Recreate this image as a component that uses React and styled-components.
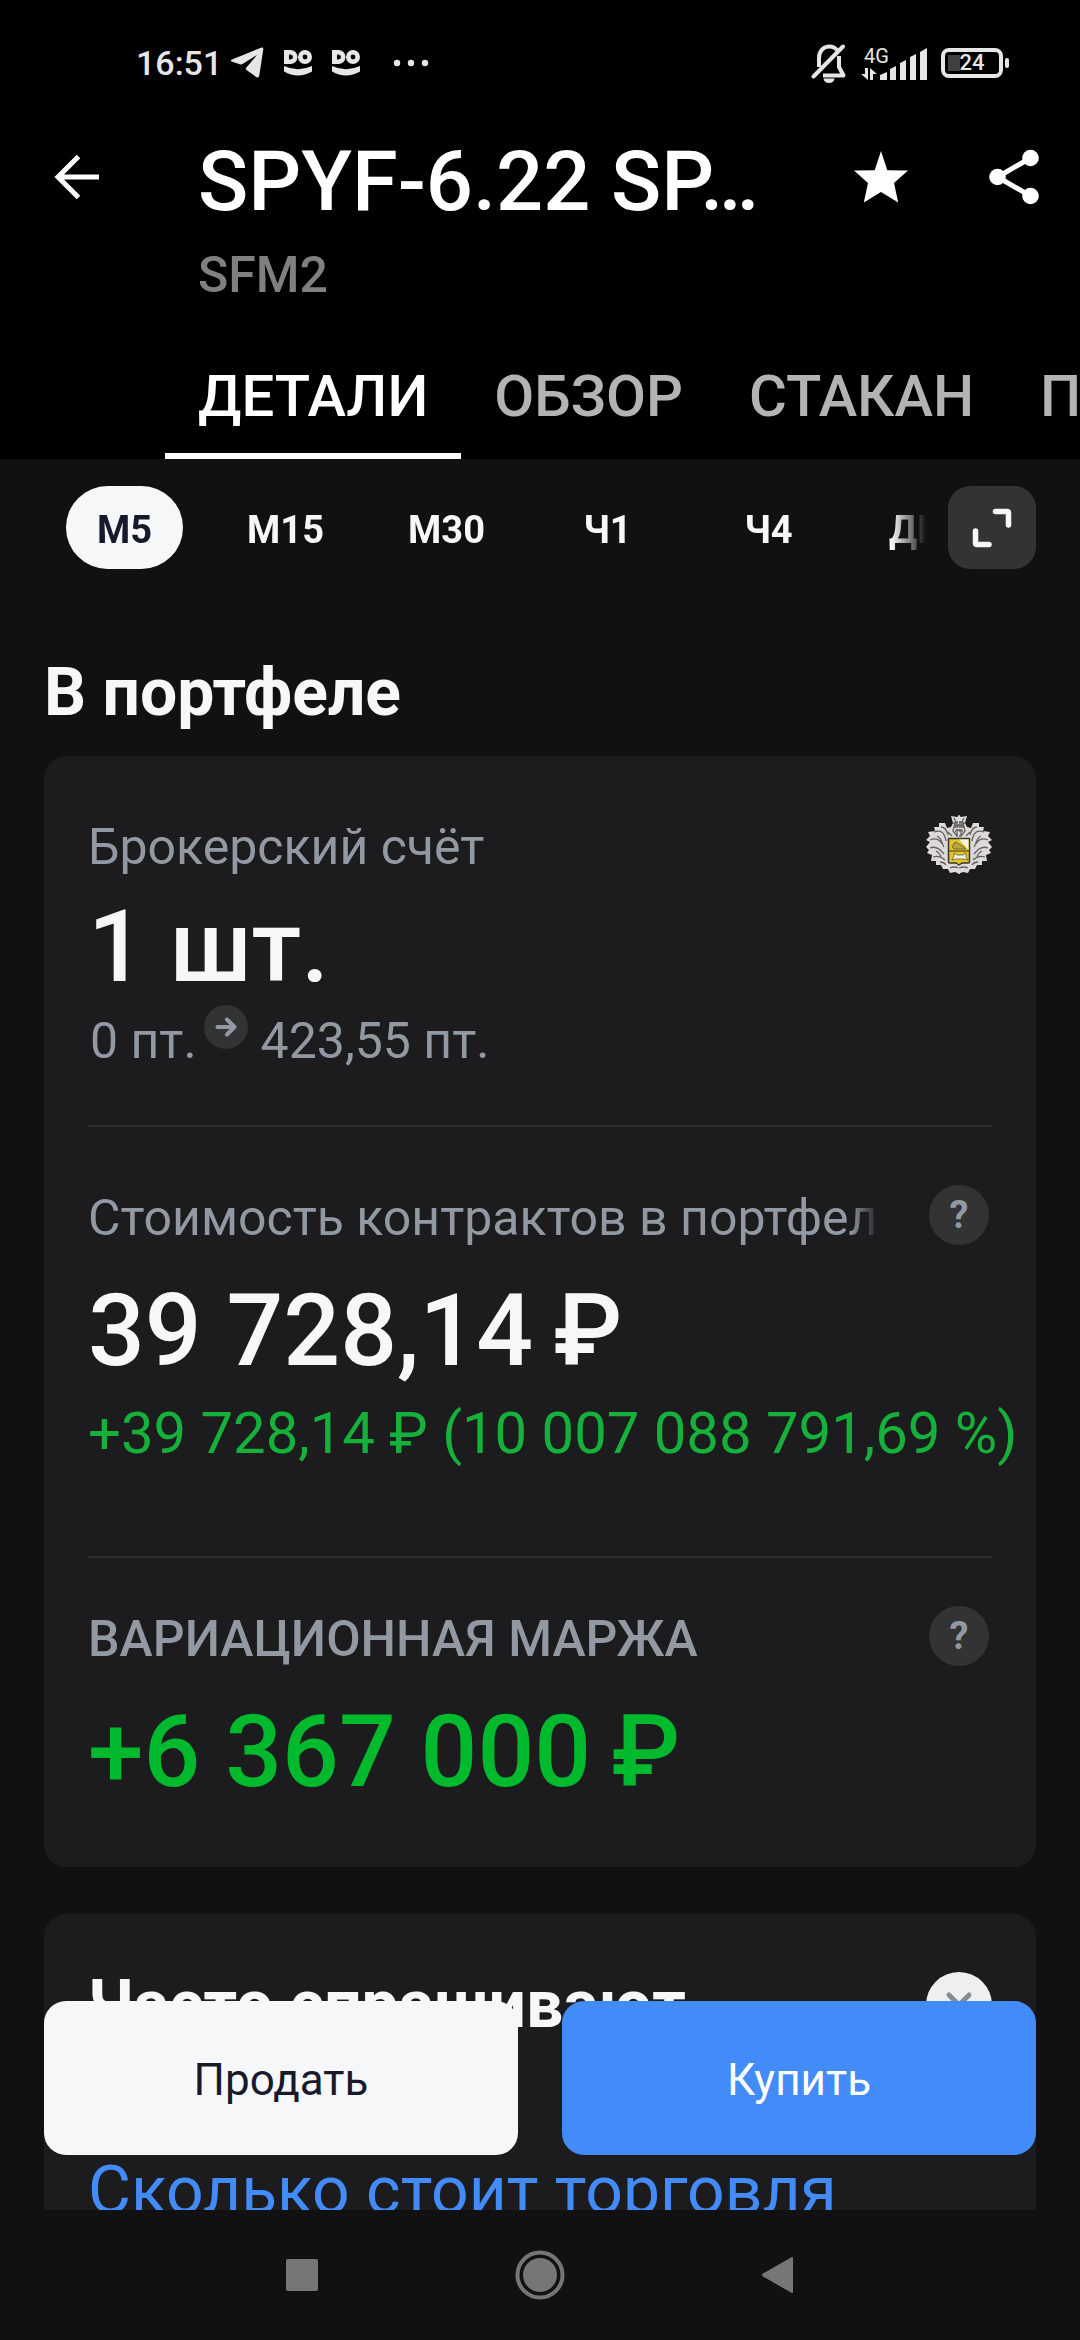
import React, { useState } from "react";
import styled, { createGlobalStyle, css } from "styled-components";

const GlobalStyle = createGlobalStyle`
  * {
    box-sizing: border-box;
  }

  body {
    margin: 0;
    background: #111111;
    font-family: Roboto, "Noto Sans", sans-serif;
  }

  button {
    padding: 0;
    border: none;
    background: none;
    color: inherit;
    font-family: inherit;
    cursor: pointer;
  }

  h1, h2, p {
    margin: 0;
  }

  svg {
    display: block;
    flex: none;
  }
`;

const Page = styled.div`
  display: flex;
  flex-direction: column;
  height: 100vh;
  overflow: hidden;
  color: #f6f7f8;
`;

const Header = styled.header`
  flex: none;
  background: #000000;
`;

const StatusBar = styled.div`
  display: flex;
  align-items: center;
  justify-content: space-between;
  height: 126px;
  padding: 0 71px 0 136px;
  color: #e6e6e6;
`;

const StatusGroup = styled.div`
  display: flex;
  align-items: center;
  gap: ${(props) => props.$gap}px;
`;

const Clock = styled.span`
  font-size: 34px;
  font-weight: 500;
`;

const Battery = styled.div`
  display: flex;
  align-items: center;
  gap: 2px;

  &::after {
    content: "";
    width: 4px;
    height: 10px;
    border-radius: 2px;
    background: #e6e6e6;
  }
`;

const BatteryBody = styled.div`
  display: flex;
  align-items: center;
  justify-content: center;
  width: 62px;
  height: 30px;
  border: 4px solid #e6e6e6;
  border-radius: 8px;
  background: linear-gradient(#404040, #404040) 3px 3px / 12px 16px no-repeat;
  font-size: 22px;
  font-weight: 500;
  line-height: 22px;
`;

const Network = styled.div`
  display: flex;
  align-items: flex-end;
  gap: 2px;
`;

/* the label is wider than the arrows and hangs over the short bars */
const NetworkType = styled.div`
  display: flex;
  flex-direction: column;
  gap: 2px;
  width: 17px;
  font-size: 20px;
  line-height: 20px;
  text-indent: 3px;
  white-space: nowrap;
`;

const AppBar = styled.div`
  display: flex;
  align-items: flex-start;
  padding: 7px 22px 0 33px;
`;

const IconButton = styled.button`
  display: flex;
  flex: none;
  align-items: center;
  justify-content: center;
  width: 88px;
  height: 88px;
`;

const Titles = styled.div`
  flex: 1;
  min-width: 0;
  margin-left: 77px;
`;

const Title = styled.h1`
  overflow: hidden;
  font-size: 83px;
  font-weight: 500;
  line-height: 98px;
  color: #ffffff;
  white-space: nowrap;
`;

const Ticker = styled.p`
  margin-top: 15px;
  font-size: 50px;
  font-weight: 500;
  line-height: 58px;
  color: #808080;
`;

const Actions = styled.div`
  display: flex;
  gap: 45px;
`;

const Tabs = styled.nav`
  display: flex;
  margin-top: 29px;
  padding-left: 165px;
  overflow: hidden;
`;

const Tab = styled.button`
  flex: none;
  height: 126px;
  padding: 6px 33px 0;
  border-bottom: 6px solid ${(props) => (props.$active ? "#ffffff" : "transparent")};
  color: ${(props) => (props.$active ? "#ffffff" : "#b3b3b3")};
  font-size: 58px;
  font-weight: 500;
`;

const Body = styled.div`
  position: relative;
  flex: 1;
  min-height: 0;
`;

const Content = styled.main`
  height: 100%;
  padding: 27px 44px 0;
  overflow: hidden;
`;

const IntervalRow = styled.div`
  display: flex;
  gap: 22px;
`;

const Intervals = styled.div`
  display: flex;
  flex: 1;
  min-width: 0;
  gap: 44px;
  padding-left: 22px;
  overflow: hidden;
  mask-image: linear-gradient(to left, transparent, #000000 34px);
`;

const Interval = styled.button`
  flex: none;
  min-width: 117px;
  height: 83px;
  padding: 5px 18px 0;
  border-radius: 42px;
  font-size: 38px;
  font-weight: 700;
  ${(props) =>
    props.$active &&
    css`
      background: #f6f7f8;
      color: #171a2b;
    `}
`;

const ExpandButton = styled.button`
  display: flex;
  flex: none;
  align-items: center;
  justify-content: center;
  width: 88px;
  height: 83px;
  border-radius: 22px;
  background: #333333;
`;

const Heading = styled.h2`
  font-size: 66px;
  font-weight: 700;
  line-height: 78px;
`;

const PortfolioHeading = styled(Heading)`
  margin: 85px 0 24px;
`;

const Card = styled.section`
  padding: 0 44px;
  border-radius: 22px;
  background: #1c1c1e;

  & + & {
    margin-top: 47px;
  }
`;

const Block = styled.div`
  padding: ${(props) => props.$top}px 0 ${(props) => props.$bottom}px;

  & + & {
    border-top: 2px solid #2e2e30;
  }
`;

const BlockTop = styled.div`
  display: flex;
  align-items: flex-start;
  justify-content: space-between;
  gap: 49px;
`;

const Label = styled.p`
  flex: 1;
  min-width: 0;
  padding-top: 3px;
  overflow: hidden;
  color: #9299a2;
  font-size: 50px;
  font-weight: ${(props) => (props.$strong ? 500 : 400)};
  line-height: 60px;
  white-space: nowrap;
  mask-image: linear-gradient(to left, transparent, #000000 30px);
`;

const HelpButton = styled.button`
  width: 60px;
  height: 60px;
  margin-right: 3px;
  border-radius: 50%;
  background: #333333;
  color: #9299a2;
  font-size: 38px;
  font-weight: 700;
`;

const Value = styled.p`
  margin-top: ${(props) => props.$gap}px;
  color: ${(props) => (props.$gain ? "#00b92d" : "#f6f7f8")};
  font-size: 100px;
  font-weight: 500;
  line-height: 118px;
  white-space: nowrap;
`;

const Points = styled.div`
  display: flex;
  gap: 7px;
  margin-top: 5px;
  padding-left: 2px;
  color: #9299a2;
  font-size: 50px;
  line-height: 60px;
`;

const PointsArrow = styled.span`
  display: flex;
  align-items: center;
  justify-content: center;
  width: 44px;
  height: 44px;
  margin: -6px 6px 0 0;
  border-radius: 50%;
  background: #333333;
`;

const Change = styled.p`
  margin-top: 9px;
  color: #16b13a;
  font-size: 58px;
  line-height: 68px;
  white-space: nowrap;
`;

const FaqTop = styled.div`
  display: flex;
  align-items: center;
  justify-content: space-between;
  padding-top: 52px;
`;

const CloseButton = styled.button`
  display: flex;
  align-items: center;
  justify-content: center;
  width: 66px;
  height: 66px;
  border-radius: 50%;
  background: #eeeff0;
`;

const FaqLink = styled.a`
  display: block;
  margin-top: 108px;
  padding-bottom: 52px;
  color: #428bf9;
  font-size: 66px;
  line-height: 78px;
  text-decoration: none;
`;

/* floats over the scrolled content */
const TradeBar = styled.div`
  position: absolute;
  right: 44px;
  bottom: 55px;
  left: 44px;
  display: flex;
  gap: 44px;
`;

const TradeButton = styled.button`
  flex: 1;
  height: 154px;
  padding-top: 3px;
  border-radius: 22px;
  background: ${(props) => (props.$primary ? "#428bf9" : "#f6f7f8")};
  color: ${(props) => (props.$primary ? "#ffffff" : "#171a2b")};
  font-size: 44px;
`;

const SystemNav = styled.nav`
  display: grid;
  flex: none;
  grid-template-columns: repeat(3, 22%);
  align-items: center;
  justify-content: center;
  justify-items: center;
  height: 130px;
`;

const TelegramIcon = () => (
  <svg width="34" height="32" viewBox="0 0 34 32" fill="currentColor">
    <path d="M2 12.5 31 .8c1.700-.6 2.500.2 2.200 2L29.300 28.500c-.4 2-1.500 2.400-3.200 1.400L16.500 23c-1-.8-1-1.500-.1-2.500L27 8 12.500 17c-1 .6-1.800.6-2.800.2L1.700 14.400c-1.300-.5-1.200-1.300.3-1.900z" />
  </svg>
);

const DodoIcon = () => (
  <svg width="28" height="26" viewBox="0 0 28 26">
    <path
      fillRule="evenodd"
      fill="currentColor"
      d="M0 0h6.500a7 7 0 0 1 0 14H0zm5 4.500v5h1.500a2.500 2.500 0 0 0 0-5z"
    />
    <circle cx="21" cy="7" r="4.700" fill="none" stroke="currentColor" strokeWidth="4.600" />
    <path d="M0 16q14 6.500 28 0v5.500q-14 8-28 0z" fill="currentColor" />
  </svg>
);

const MoreDots = () => (
  <svg width="36" height="8" viewBox="0 0 36 8" fill="currentColor">
    <circle cx="4" cy="4" r="3.200" />
    <circle cx="18" cy="4" r="3.200" />
    <circle cx="32" cy="4" r="3.200" />
  </svg>
);

const MutedBell = () => (
  <svg width="36" height="40" viewBox="0 0 36 40" fill="none" stroke="currentColor" strokeWidth="4">
    <path d="M8 24V15C8 8 12.500 3.500 18.500 3.500c3.500 0 6 1.600 8 4" />
    <path d="M28 13v11l4.500 8.500H12" strokeLinejoin="round" />
    <path d="M2.500 33.500 32 3.500" strokeLinecap="round" />
    <path d="M12.500 35.500h11a5.500 4.500 0 0 1-11 0z" fill="currentColor" stroke="none" />
  </svg>
);

const DataArrows = () => (
  <svg width="17" height="12" viewBox="0 0 17 12" fill="currentColor">
    <path d="M4 0h3v12L0 6h4zM9 0l7 6h-4v6H9z" />
  </svg>
);

const SignalBars = () => (
  <svg width="47" height="32" viewBox="0 0 47 32" fill="currentColor">
    <path d="M0 32v-5l7-3v8zM10 32V21l6-3v14zM20 32V15l6-3v20zM30 32V9l6-3v26zM40 32V4l7-4v32z" />
  </svg>
);

const BackIcon = () => (
  <svg width="48" height="48" viewBox="0 0 48 48" fill="none" stroke="#ffffff" strokeWidth="5">
    <path d="M46 24H5M25.500 3.500 5 24l20.500 20.500" />
  </svg>
);

const StarIcon = () => (
  <svg width="54" height="54" viewBox="0 0 54 54" fill="#ffffff">
    <path d="m27 1 6.300 19.300L54 20.500 40 33l4.200 19.500L27 42 9.800 52.500 14 33 0 20.500l20.700-.2z" />
  </svg>
);

const ShareIcon = () => (
  <svg width="52" height="56" viewBox="0 0 52 56" fill="#ffffff">
    <path d="M42.500 9 9.500 28l33 19" fill="none" stroke="#ffffff" strokeWidth="5" />
    <circle cx="42.500" cy="9" r="8.300" />
    <circle cx="9.500" cy="28" r="8.300" />
    <circle cx="42.500" cy="47" r="8.300" />
  </svg>
);

const ExpandIcon = () => (
  <svg
    width="40"
    height="40"
    viewBox="0 0 40 40"
    fill="none"
    stroke="#f6f7f8"
    strokeWidth="5.500"
    strokeLinecap="round"
    strokeLinejoin="round"
  >
    <path d="M23.500 3.500h11.500q1.500 0 1.500 1.500v12" />
    <path d="M3.500 23v12q0 1.500 1.500 1.500h12" />
  </svg>
);

const ArrowIcon = () => (
  <svg
    width="22"
    height="20"
    viewBox="0 0 22 20"
    fill="none"
    stroke="#9299a2"
    strokeWidth="4"
    strokeLinecap="round"
    strokeLinejoin="round"
  >
    <path d="M2.500 10h16M12 2.500l7.500 7.500-7.500 7.500" />
  </svg>
);

const CloseIcon = () => (
  <svg width="28" height="28" viewBox="0 0 28 28" stroke="#868c94" strokeWidth="5" strokeLinecap="round">
    <path d="M4 4l20 20M24 4 4 24" />
  </svg>
);

/* left half of the mantling, drawn twice */
const CrestHalf = () => (
  <>
    <path
      fill="#dddbda"
      d="M34 1 31 3 25 2 27 9 25 13 21 14 19 9 13 9 13 13 8 13 9 17 2 18 4 22 0 26 4 28 0 33 3 36 1 39 6 41 5 47 10 47 10 51 15 51 17 55 22 55 24 59 29 58 34 60z"
    />
    <g fill="none" stroke="#66615f" strokeWidth="1.300">
      <path d="M20 27Q18 14 8 18M18 33Q13 22 4 26M18 40Q11 31 4 34M19 46Q13 41 7 43M22 21Q20 13 15 13" />
      <path d="M24 54Q28 52 33 54M14 48Q18 48 20 51M11 22Q16 25 16 30M10 37Q14 39 15 43" />
      <path d="M28 4l2 4h3M27 9h6M29 9l-2 8 4 5h2M28 13h5M29 17h4M31 22v-4M22 18l4 4" />
    </g>
  </>
);

const Crest = () => (
  <svg width="66" height="60" viewBox="0 0 66 60" strokeLinejoin="round">
    <CrestHalf />
    <g transform="matrix(-1 0 0 1 66 0)">
      <CrestHalf />
    </g>
    <path d="M29 10h8v3h-8zM30 15h6v2h-6z" fill="#77706f" />
    <path
      d="M22.500 24.500h21V48q0 1-1 1H36l-3 2-3-2h-6.500q-1 0-1-1z"
      fill="#dfc52b"
      stroke="#39362c"
      strokeWidth="1.500"
    />
    <path d="M33 25.500h9.500V36z" fill="#f4f1e8" />
    <path d="M23 37h20" stroke="#6f641c" strokeWidth="1.500" />
    <path d="M26 33l3-5 4 2 5 3 2 2H28z" fill="#b8a63c" stroke="#554d20" strokeWidth=".7" />
    <path d="M26 46l2-4 0-3 3 2h6l3-2 0 4 2 3-4-1h-8z" fill="#f4f1e8" stroke="#554d20" strokeWidth=".7" />
  </svg>
);

const RecentsIcon = () => (
  <svg width="34" height="34" viewBox="0 0 34 34">
    <rect x="1" y="1" width="32" height="32" rx="2" fill="#767676" />
  </svg>
);

const HomeIcon = () => (
  <svg width="50" height="50" viewBox="0 0 50 50">
    <circle cx="25" cy="25" r="22.500" fill="none" stroke="#767676" strokeWidth="4" />
    <circle cx="25" cy="25" r="17" fill="#767676" />
  </svg>
);

const NavBackIcon = () => (
  <svg width="34" height="38" viewBox="0 0 34 38">
    <path d="M31 2v34L3 20q-2-1 0-2z" fill="#767676" stroke="#767676" strokeWidth="2" strokeLinejoin="round" />
  </svg>
);

const tabs = ["ДЕТАЛИ", "ОБЗОР", "СТАКАН", "ПУЛЬС"];
const intervals = ["M5", "M15", "M30", "Ч1", "Ч4", "ДЕНЬ"];

const App = () => {
  const [tab, setTab] = useState("ДЕТАЛИ");
  const [interval, setActiveInterval] = useState("M5");

  return (
    <Page>
      <GlobalStyle />
      <Header>
        <StatusBar>
          <StatusGroup $gap={33}>
            <StatusGroup $gap={8}>
              <Clock>16:51</Clock>
              <StatusGroup $gap={20}>
                <TelegramIcon />
                <DodoIcon />
                <DodoIcon />
              </StatusGroup>
            </StatusGroup>
            <MoreDots />
          </StatusGroup>
          <StatusGroup $gap={14}>
            <MutedBell />
            <Network>
              <NetworkType>
                4G
                <DataArrows />
              </NetworkType>
              <SignalBars />
            </Network>
            <Battery>
              <BatteryBody>24</BatteryBody>
            </Battery>
          </StatusGroup>
        </StatusBar>

        <AppBar>
          <IconButton aria-label="Назад">
            <BackIcon />
          </IconButton>
          <Titles>
            <Title>SPYF-6.22 SP…</Title>
            <Ticker>SFM2</Ticker>
          </Titles>
          <Actions>
            <IconButton aria-label="В избранное">
              <StarIcon />
            </IconButton>
            <IconButton aria-label="Поделиться">
              <ShareIcon />
            </IconButton>
          </Actions>
        </AppBar>

        <Tabs>
          {tabs.map((name) => (
            <Tab key={name} $active={name === tab} onClick={() => setTab(name)}>
              {name}
            </Tab>
          ))}
        </Tabs>
      </Header>

      <Body>
        <Content>
          <IntervalRow>
            <Intervals>
              {intervals.map((name) => (
                <Interval
                  key={name}
                  $active={name === interval}
                  onClick={() => setActiveInterval(name)}
                >
                  {name}
                </Interval>
              ))}
            </Intervals>
            <ExpandButton aria-label="Развернуть график">
              <ExpandIcon />
            </ExpandButton>
          </IntervalRow>

          <PortfolioHeading>В портфеле</PortfolioHeading>

          <Card>
            <Block $top={58} $bottom={54}>
              <BlockTop>
                <Label>Брокерский счёт</Label>
                <Crest />
              </BlockTop>
              <Value $gap={11}>1 шт.</Value>
              <Points>
                <span>0 пт.</span>
                <PointsArrow>
                  <ArrowIcon />
                </PointsArrow>
                <span>423,55 пт.</span>
              </Points>
            </Block>
            <Block $top={58} $bottom={89}>
              <BlockTop>
                <Label>Стоимость контрактов в портфеле</Label>
                <HelpButton aria-label="Подробнее о стоимости">?</HelpButton>
              </BlockTop>
              <Value $gap={24}>39 728,14&thinsp;₽</Value>
              <Change>+39 728,14 ₽ (10 007 088 791,69 %)</Change>
            </Block>
            <Block $top={48} $bottom={56}>
              <BlockTop>
                <Label $strong>ВАРИАЦИОННАЯ МАРЖА</Label>
                <HelpButton aria-label="Подробнее о марже">?</HelpButton>
              </BlockTop>
              <Value $gap={24} $gain>
                +6 367 000&thinsp;₽
              </Value>
            </Block>
          </Card>

          <Card>
            <FaqTop>
              <Heading>Часто спрашивают</Heading>
              <CloseButton aria-label="Закрыть">
                <CloseIcon />
              </CloseButton>
            </FaqTop>
            <FaqLink href="#">Сколько стоит торговля</FaqLink>
          </Card>
        </Content>

        <TradeBar>
          <TradeButton>Продать</TradeButton>
          <TradeButton $primary>Купить</TradeButton>
        </TradeBar>
      </Body>

      <SystemNav>
        <IconButton aria-label="Недавние">
          <RecentsIcon />
        </IconButton>
        <IconButton aria-label="Домой">
          <HomeIcon />
        </IconButton>
        <IconButton aria-label="Назад в системе">
          <NavBackIcon />
        </IconButton>
      </SystemNav>
    </Page>
  );
};

export default App;
